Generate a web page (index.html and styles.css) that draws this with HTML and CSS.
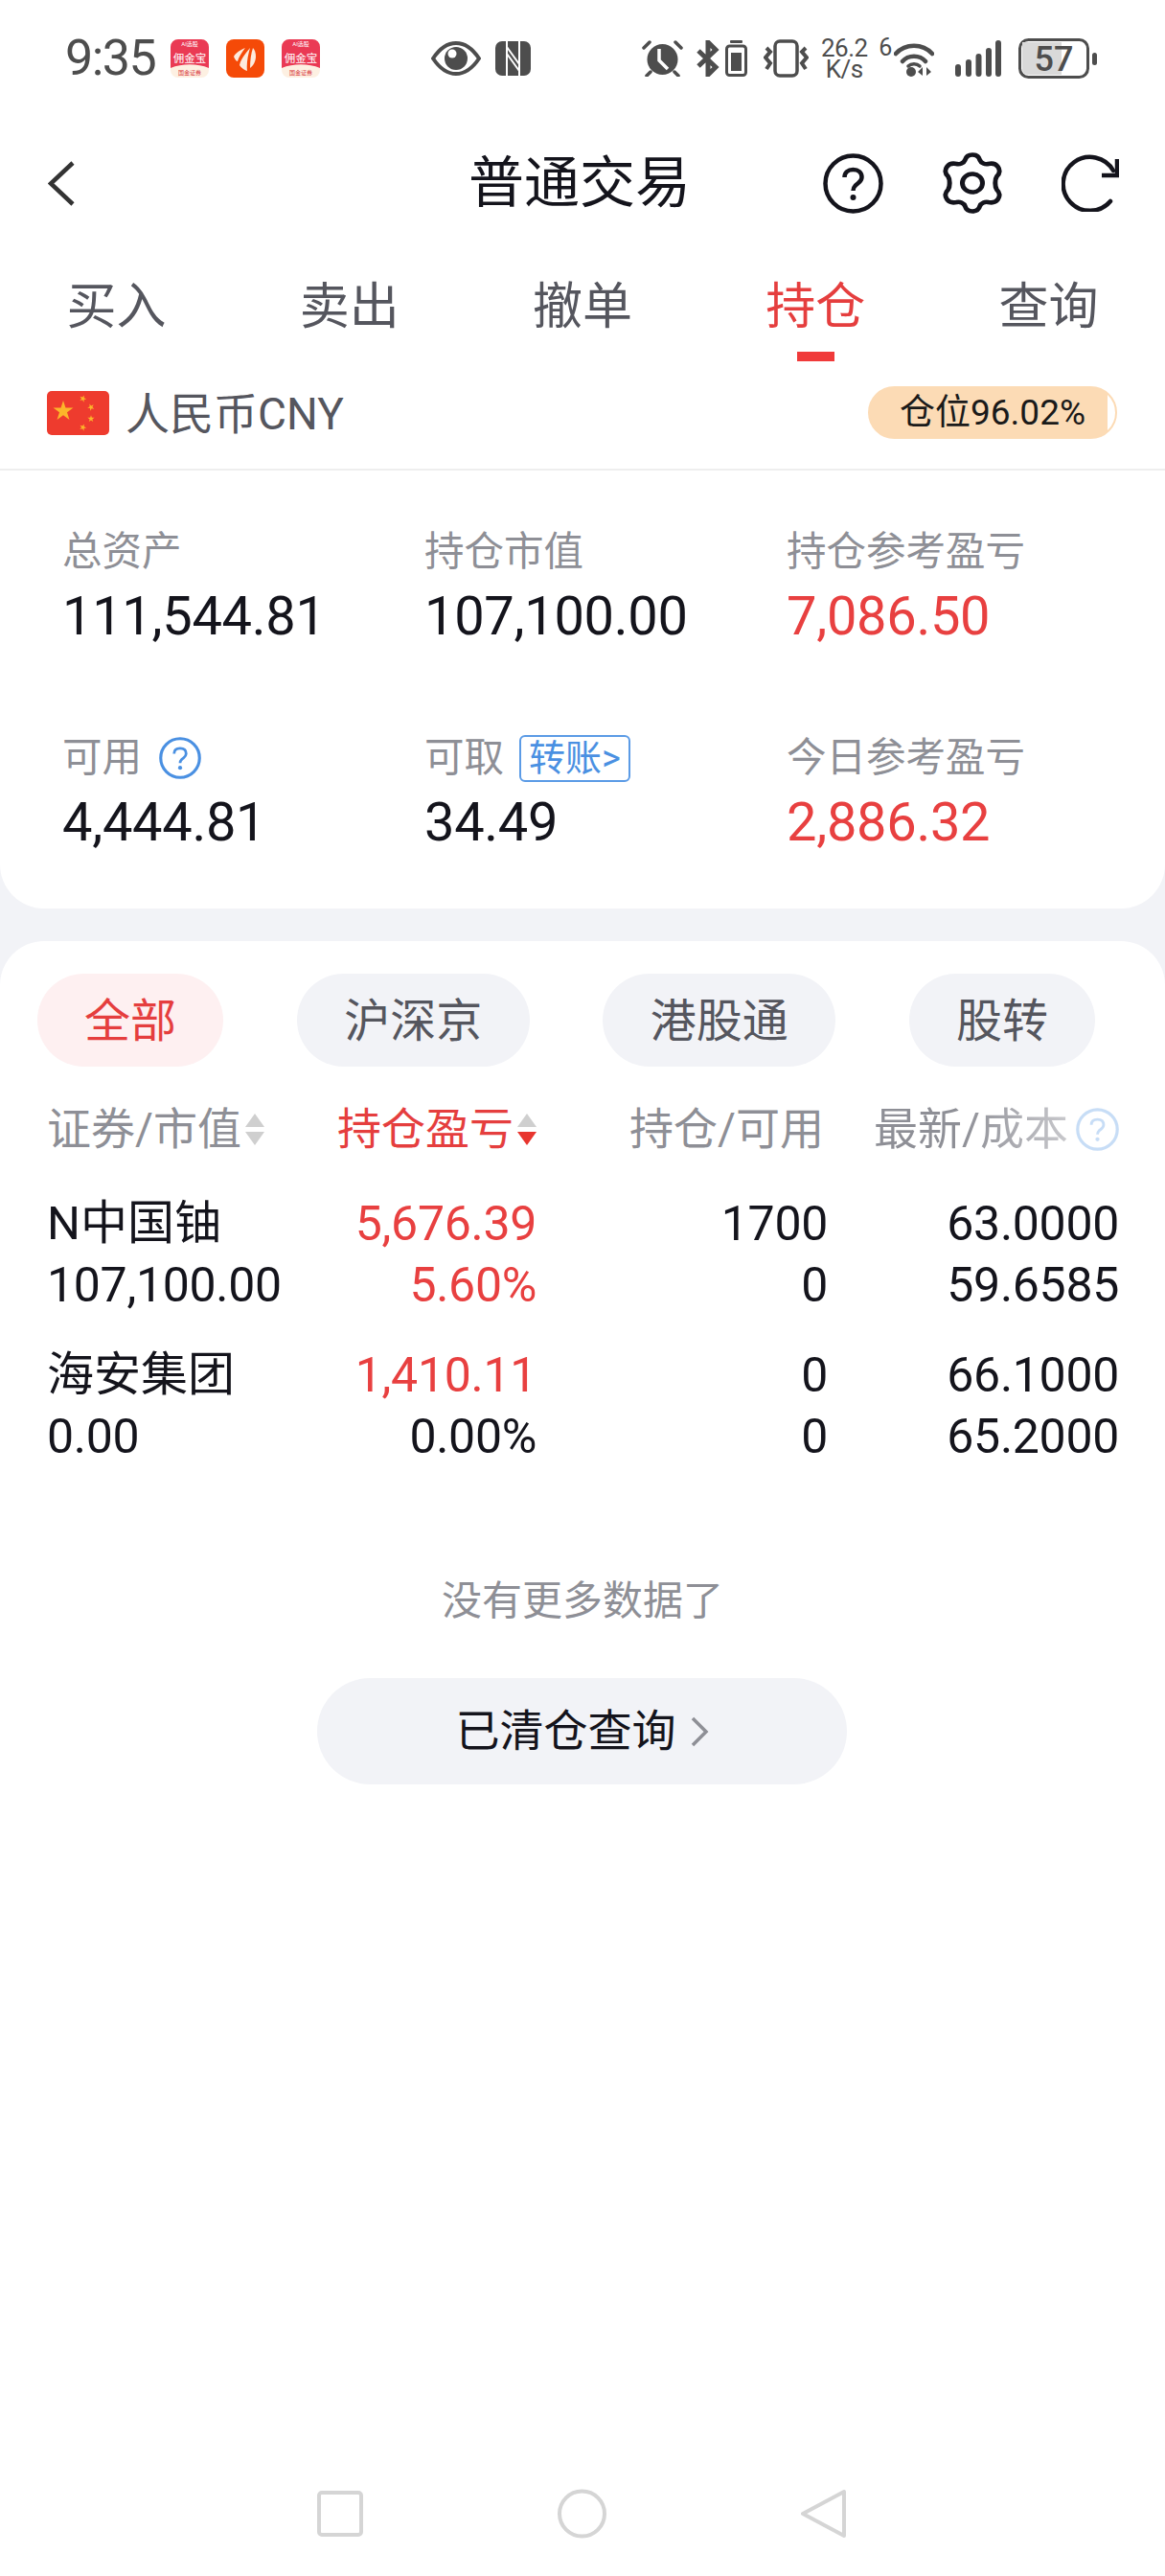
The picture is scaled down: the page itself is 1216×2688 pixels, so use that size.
FILE: index.html
```html
<!DOCTYPE html>
<html>
<head>
    <title>普通交易</title>
    <link rel="stylesheet" href="styles.css">
</head>
<body>
    <div class="top-section">
        <!-- status bar -->
        <div class="status-bar">
            <span class="time">9:35</span>
            <svg class="app-icon" width="40" height="40" viewBox="0 0 40 40">
                <rect width="40" height="40" rx="8" fill="#fdf0e2"/>
                <path d="M0 8 a8 8 0 0 1 8 -8 h24 a8 8 0 0 1 8 8 v22 c-12 -5 -28 -5 -40 0z" fill="#ea3a54"/>
                <text x="20" y="7" class="app-tiny" fill="#fff">AI选股</text>
                <text x="20" y="24" class="app-name" fill="#fff">佣金宝</text>
                <text x="20" y="37" class="app-tiny" fill="#d8363c">国金证券</text>
            </svg>
            <svg class="app-icon" width="40" height="40" viewBox="0 0 40 40">
                <rect width="40" height="40" rx="8" fill="#f54a08"/>
                <path d="M20 9 C15 11 10 14 8 18 C9 21 11 23 12 23 C13 19 16 14 20 9Z" fill="#fdebdd"/>
                <path d="M25 9 C20 15 15 21 14 27 C16 30 19 32 22 33 C21 25 23 16 25 9Z" fill="#fdebdd"/>
                <path d="M28 9 C26 15 25 22 25 30 C28 28 31 23 31 18 C31 14 30 11 28 9Z" fill="#fdebdd"/>
            </svg>
            <svg class="app-icon" width="40" height="40" viewBox="0 0 40 40">
                <rect width="40" height="40" rx="8" fill="#fdf0e2"/>
                <path d="M0 8 a8 8 0 0 1 8 -8 h24 a8 8 0 0 1 8 8 v22 c-12 -5 -28 -5 -40 0z" fill="#ea3a54"/>
                <text x="20" y="7" class="app-tiny" fill="#fff">AI选股</text>
                <text x="20" y="24" class="app-name" fill="#fff">佣金宝</text>
                <text x="20" y="37" class="app-tiny" fill="#d8363c">国金证券</text>
            </svg>

            <svg class="st-eye" width="52" height="36" viewBox="0 0 52 36">
                <path d="M2 18 C10 6 18 2 26 2 C34 2 42 6 50 18 C42 30 34 34 26 34 C18 34 10 30 2 18Z" fill="none" stroke="#4d4d4d" stroke-width="4"/>
                <circle cx="26" cy="18" r="12" fill="#4d4d4d"/>
                <circle cx="22" cy="13" r="4.5" fill="#fff"/>
            </svg>
            <svg class="st-nfc" width="37" height="36" viewBox="0 0 37 36">
                <rect width="37" height="36" rx="7" fill="#4d4d4d"/>
                <path d="M12 0 V36 M25 0 V36 M12 6 L25 24 M12 13 L25 31" fill="none" stroke="#fff" stroke-width="2"/>
            </svg>
            <svg class="st-alarm" width="43" height="38" viewBox="0 0 43 38">
                <circle cx="21.5" cy="20" r="16" fill="#4d4d4d"/>
                <path d="M18 9 V21 L27 30" fill="none" stroke="#fff" stroke-width="3.5"/>
                <path d="M2 8 L8 2 M35 2 L41 8 M5 37 L9 33 M38 37 L34 33" fill="none" stroke="#4d4d4d" stroke-width="3.5" stroke-linecap="round"/>
            </svg>
            <svg class="st-bt" width="53" height="38" viewBox="0 0 53 38">
                <path d="M2 11 L20 28 L12 36 V2 L20 10 L2 27" fill="none" stroke="#4d4d4d" stroke-width="5"/>
                <rect x="31.5" y="6" width="20" height="30.5" rx="3" fill="none" stroke="#4d4d4d" stroke-width="3"/>
                <rect x="35" y="0" width="13" height="3" rx="1" fill="#4d4d4d"/>
                <rect x="36" y="13" width="11" height="19" fill="#4d4d4d"/>
            </svg>
            <svg class="st-vibrate" width="47" height="40" viewBox="0 0 47 40">
                <rect x="12" y="2" width="23" height="36" rx="5" fill="none" stroke="#4d4d4d" stroke-width="3.5"/>
                <path d="M3 9 L7 13 L2 19 L7 25 L3 31 M44 9 L40 13 L45 19 L40 25 L44 31" fill="none" stroke="#4d4d4d" stroke-width="4"/>
            </svg>
            <div class="st-speed"><span>26.2</span><span>K/s</span></div>
            <span class="st-six">6</span>
            <svg class="st-wifi" width="42" height="38" viewBox="0 0 42 38">
                <path d="M2 14 C12 3 30 3 40 14 M9 22 C15 15 27 15 33 22" fill="none" stroke="#4d4d4d" stroke-width="4.5" stroke-linecap="round"/>
                <path d="M15 27 C18 24 24 24 27 27" fill="none" stroke="#4d4d4d" stroke-width="3.5" stroke-linecap="round"/>
                <circle cx="18" cy="33" r="5" fill="#4d4d4d"/>
                <path d="M30 28 V37 L25 33Z M34 28 V37 L39 33Z" fill="#4d4d4d"/>
            </svg>
            <svg class="st-signal" width="48" height="38" viewBox="0 0 48 38">
                <path d="M3 28 V35 M14 23 V35 M24.500 17 V35 M35 11 V35 M45 3 V35" fill="none" stroke="#4d4d4d" stroke-width="6" stroke-linecap="round"/>
            </svg>
            <svg class="st-battery" width="82" height="42" viewBox="0 0 82 42">
                <rect x="1.500" y="1.500" width="71" height="39" rx="9" fill="#fff" stroke="#4d4d4d" stroke-width="3"/>
                <path d="M4 4 h41 v34 h-35 a6 6 0 0 1 -6 -6z" fill="#d9d9d9"/>
                <text x="37" y="34" class="battery-num" fill="#4d4d4d">57</text>
                <rect x="77" y="15" width="5" height="13" rx="2.500" fill="#4d4d4d"/>
            </svg>
        </div>

        <!-- title -->
        <div class="nav">
            <svg class="back" width="28" height="47" viewBox="0 0 28 47">
                <path d="M26 2 L3 23.500 L26 45" fill="none" stroke="#333" stroke-width="4.500"/>
            </svg>
            <h1>普通交易</h1>
            <div class="nav-actions">
                <svg width="63" height="63" viewBox="0 0 63 63">
                    <circle cx="31.500" cy="31.500" r="29" fill="none" stroke="#14141c" stroke-width="4.500"/>
                    <path d="M22.500 25 C22.500 20 26 17 31.500 17 C37 17 40.500 20 40.500 25 C40.500 30 36 31 33.500 34 C32 35.500 31.500 37 31.500 39" fill="none" stroke="#14141c" stroke-width="4.500"/>
                    <circle cx="31.500" cy="46" r="3" fill="#14141c"/>
                </svg>
                <svg width="62" height="64" viewBox="4 0 56 64" preserveAspectRatio="none">
                    <path d="M25 8 C26 4 29 2.500 32 2.500 C35 2.500 38 4 39 8 C40 11 44 13 47 12 C51 11 54 12 56 15 C58 18 58 22 55 25 C53 28 53 36 55 39 C58 42 58 46 56 49 C54 52 51 53 47 52 C44 51 40 53 39 56 C38 60 35 61.500 32 61.500 C29 61.500 26 60 25 56 C24 53 20 51 17 52 C13 53 10 52 8 49 C6 46 6 42 9 39 C11 36 11 28 9 25 C6 22 6 18 8 15 C10 12 13 11 17 12 C20 13 24 11 25 8Z" fill="none" stroke="#14141c" stroke-width="4.500"/>
                    <circle cx="32" cy="32" r="9.500" fill="none" stroke="#14141c" stroke-width="4.500"/>
                </svg>
                <svg width="60" height="60" viewBox="0 0 60 60">
                    <path d="M54 17 A28 28 0 1 0 51 49" fill="none" stroke="#14141c" stroke-width="4.500" stroke-linecap="round"/>
                    <path d="M58 5 V22 H42" fill="none" stroke="#14141c" stroke-width="4.500"/>
                </svg>
            </div>
        </div>

        <div class="tabs">
            <div class="tab">买入</div>
            <div class="tab">卖出</div>
            <div class="tab">撤单</div>
            <div class="tab active">持仓<div class="tab-bar"></div></div>
            <div class="tab">查询</div>
        </div>

        <div class="currency-row">
            <svg width="65" height="46" viewBox="0 0 65 46">
                <defs>
                    <polygon id="star" points="0,-1 .225,-.309 .951,-.309 .363,.118 .588,.809 0,.382 -.588,.809 -.363,.118 -.951,-.309 -.225,-.309"/>
                </defs>
                <rect width="65" height="46" rx="5" fill="#ee3b2e"/>
                <use href="#star" fill="#fcb62a" transform="translate(17 21) scale(11)"/>
                <use href="#star" fill="#fcb62a" transform="translate(37.500 8) scale(3.800) rotate(20)"/>
                <use href="#star" fill="#fcb62a" transform="translate(46 17) scale(3.800) rotate(45)"/>
                <use href="#star" fill="#fcb62a" transform="translate(46 29) scale(3.800)"/>
                <use href="#star" fill="#fcb62a" transform="translate(37.500 38) scale(3.800) rotate(20)"/>
            </svg>
            <span class="currency-name">人民币CNY</span>
            <span class="position-pill">仓位96.02%</span>
        </div>

        <!-- account summary -->
        <div class="stats-card">
            <div class="stat">
                <div class="stat-label">总资产</div>
                <div class="stat-value">111,544.81</div>
            </div>
            <div class="stat">
                <div class="stat-label">持仓市值</div>
                <div class="stat-value">107,100.00</div>
            </div>
            <div class="stat">
                <div class="stat-label">持仓参考盈亏</div>
                <div class="stat-value red">7,086.50</div>
            </div>
            <div class="stat">
                <div class="stat-label">可用
                    <svg class="help" width="44" height="44" viewBox="0 0 63 63">
                        <symbol id="helpMark" viewBox="0 0 63 63">
                            <circle cx="31.500" cy="31.500" r="29" fill="none" stroke="#4a90e2" stroke-width="4.500"/>
                            <path d="M22.500 25 C22.500 20 26 17 31.500 17 C37 17 40.500 20 40.500 25 C40.500 30 36 31 33.500 34 C32 35.500 31.500 37 31.500 39" fill="none" stroke="#4a90e2" stroke-width="4"/>
                            <circle cx="31.500" cy="46" r="3" fill="#4a90e2"/>
                        </symbol>
                        <use href="#helpMark"/>
                    </svg>
                </div>
                <div class="stat-value">4,444.81</div>
            </div>
            <div class="stat">
                <div class="stat-label">可取<span class="transfer-tag">转账&gt;</span></div>
                <div class="stat-value">34.49</div>
            </div>
            <div class="stat">
                <div class="stat-label">今日参考盈亏</div>
                <div class="stat-value red">2,886.32</div>
            </div>
        </div>
    </div>

    <div class="holdings">
        <div class="filters">
            <div class="filter active narrow">全部</div>
            <div class="filter">沪深京</div>
            <div class="filter">港股通</div>
            <div class="filter narrow">股转</div>
        </div>

        <div class="table-row table-head">
            <div class="head-cell left">证券/市值
                <svg class="sort" width="20" height="33" viewBox="0 0 20 33">
                    <path d="M0 14 H20 L10 0Z M0 19 H20 L10 33Z" fill="#cfcfcf"/>
                </svg>
            </div>
            <div class="head-cell sorted">持仓盈亏
                <svg class="sort" width="20" height="33" viewBox="0 0 20 33">
                    <path d="M0 14 H20 L10 0Z" fill="#cfcfcf"/>
                    <path d="M0 19 H20 L10 33Z" fill="#e8352e"/>
                </svg>
            </div>
            <div class="head-cell head-qty">持仓/可用</div>
            <div class="head-cell last-head">
                <span class="fade-text">最新/成本</span>
                <svg class="help faded" width="45" height="45" viewBox="0 0 63 63"><use href="#helpMark"/></svg>
            </div>
        </div>

        <div class="table-row holding">
            <div class="cell left"><div class="name">N中国铀</div><div>107,100.00</div></div>
            <div class="cell red"><div>5,676.39</div><div>5.60%</div></div>
            <div class="cell"><div>1700</div><div>0</div></div>
            <div class="cell"><div>63.0000</div><div>59.6585</div></div>
        </div>
        <div class="table-row holding">
            <div class="cell left"><div class="name">海安集团</div><div>0.00</div></div>
            <div class="cell"><div class="red">1,410.11</div><div>0.00%</div></div>
            <div class="cell"><div>0</div><div>0</div></div>
            <div class="cell"><div>66.1000</div><div>65.2000</div></div>
        </div>

        <div class="no-more">没有更多数据了</div>
        <div class="cleared-button">已清仓查询
            <svg width="20" height="32" viewBox="0 0 20 32">
                <path d="M3 2 L17 16 L3 30" fill="none" stroke="#8e8f96" stroke-width="3.500"/>
            </svg>
        </div>

        <div class="system-nav">
            <svg width="48" height="48" viewBox="0 0 48 48">
                <rect x="2" y="2" width="44" height="44" rx="3" fill="none" stroke="#d5d5d5" stroke-width="4"/>
            </svg>
            <svg width="53" height="52" viewBox="0 0 53 52">
                <circle cx="26.500" cy="26" r="23.500" fill="none" stroke="#d5d5d5" stroke-width="4"/>
            </svg>
            <svg width="47" height="52" viewBox="0 0 47 52">
                <path d="M45 3 V49 L2 26Z" fill="none" stroke="#d5d5d5" stroke-width="4" stroke-linejoin="round"/>
            </svg>
        </div>
    </div>
</body>
</html>
```

FILE: styles.css
```css
html,
body {
    margin: 0;
    padding: 0;
}

body {
    width: 1216px;
    height: 2688px;
    display: flex;
    flex-direction: column;
    overflow: hidden;
    background-color: #f2f3f7;
    color: #14141c;
    font-family: Roboto, "Noto Sans CJK SC", sans-serif;
}

.red {
    color: #e84040;
}

.top-section {
    background-color: #fff;
    border-radius: 0 0 46px 46px;
}

/* status bar */
.status-bar {
    height: 122px;
    padding-left: 68px;
    display: flex;
    align-items: center;
    color: #4d4d4d;
}

.time {
    font-size: 52px;
    line-height: 60px;
    letter-spacing: -1.5px;
    margin-right: 16px;
}

.app-icon {
    margin-right: 18px;
}

.app-name {
    font-size: 11.5px;
    text-anchor: middle;
}

.app-tiny {
    font-size: 6px;
    text-anchor: middle;
}

.st-eye {
    margin-left: 98px;
}

.st-nfc {
    margin-left: 15px;
}

.st-alarm {
    margin-left: 116px;
}

.st-bt {
    margin-left: 14px;
}

.st-vibrate {
    margin-left: 17px;
}

.st-speed {
    margin-left: 10px;
    width: 54px;
    display: flex;
    flex-direction: column;
    align-items: center;
    font-size: 26px;
    line-height: 22px;
    letter-spacing: -0.5px;
}

.st-six {
    margin-left: 9px;
    margin-top: -22px;
    font-size: 25px;
    line-height: 26px;
}

.st-wifi {
    margin-left: 2px;
}

.st-signal {
    margin-left: 22px;
}

.st-battery {
    margin-left: 18px;
}

.battery-num {
    font-size: 36px;
    font-weight: 500;
    text-anchor: middle;
}

/* title bar */
.nav {
    height: 138px;
    padding: 0 48px 0 42px;
    display: grid;
    grid-template-columns: 1fr auto 1fr;
    align-items: center;
}

.back {
    margin-left: 8px;
}

.nav h1 {
    margin: 0;
    font-size: 58px;
    line-height: 70px;
    font-weight: 400;
}

.nav-actions {
    display: flex;
    align-items: center;
    justify-content: flex-end;
    gap: 62px;
}

/* tabs */
.tabs {
    margin-top: 31px;
    display: flex;
}

.tab {
    flex: 1;
    text-align: center;
    font-size: 52px;
    line-height: 60px;
    color: #55565e;
}

.tab:not(.active) {
    padding-bottom: 26px;
}

.tab.active {
    color: #e53e3e;
}

.tab-bar {
    width: 39px;
    height: 10px;
    margin: 16px auto 0;
    background-color: #f03a3a;
}

.currency-row {
    padding: 26px 50px 31px 49px;
    display: flex;
    align-items: center;
    border-bottom: 2px solid #eeeeee;
}

.currency-name {
    margin-left: 17px;
    padding-top: 3px;
    font-size: 46px;
    line-height: 52px;
    color: #55565e;
}

.position-pill {
    margin-left: auto;
    box-sizing: border-box;
    width: 260px;
    height: 55px;
    padding-left: 31px;
    border: 2px solid #fcdbb5;
    border-radius: 28px;
    background: linear-gradient(to right, #fcdbb5 97%, #fff 97%);
    font-size: 37px;
    line-height: 51px;
    color: #1a1a1a;
}

/* account summary */
.stats-card {
    padding: 57px 0 60px 65px;
    display: grid;
    grid-template-columns: 378px 378px 1fr;
    row-gap: 90px;
}

.stat-label {
    height: 56px;
    display: flex;
    align-items: center;
    font-size: 41.5px;
    line-height: 56px;
    color: #8e8f96;
}

.stat-value {
    margin-top: 9px;
    font-size: 56px;
    line-height: 60px;
    letter-spacing: -0.3px;
}

.help {
    margin-left: 18px;
}

.transfer-tag {
    box-sizing: border-box;
    width: 116px;
    height: 49px;
    margin-left: 16px;
    border: 2px solid #5b9be6;
    border-radius: 6px;
    text-align: center;
    font-size: 38px;
    line-height: 44px;
    color: #4a90e2;
}

/* holdings list */
.holdings {
    flex: 1;
    margin-top: 34px;
    display: flex;
    flex-direction: column;
    background-color: #fff;
    border-radius: 46px 46px 0 0;
}

.filters {
    padding: 34px 73px 0 39px;
    display: flex;
    justify-content: space-between;
}

.filter {
    width: 243px;
    height: 97px;
    border-radius: 49px;
    text-align: center;
    background-color: #f2f3f7;
    font-size: 48px;
    line-height: 99px;
    color: #55565e;
}

.filter.narrow {
    width: 194px;
}

.filter.active {
    background-color: #fef0f1;
    color: #e53e3e;
}

.table-row {
    padding: 0 48px 0 49px;
    display: grid;
    grid-template-columns: 252px 259px 304px 304px;
}

.table-head {
    margin-top: 35px;
}

.head-cell {
    display: flex;
    align-items: center;
    justify-content: flex-end;
    font-size: 46px;
    line-height: 60px;
    color: #8e8f96;
    white-space: nowrap;
}

.head-cell.left {
    justify-content: flex-start;
}

.head-cell.sorted {
    color: #e53e3e;
}

.head-cell.head-qty {
    padding-right: 4px;
}

.sort {
    margin-left: 4px;
}

.last-head .help {
    margin-left: 8px;
    margin-right: 0;
}

.fade-text {
    background: linear-gradient(to right, #8e8f96 45%, #c8c8cc 100%);
    -webkit-background-clip: text;
    background-clip: text;
    color: transparent;
}

.faded {
    opacity: 0.3;
}

.holding {
    margin-top: 30px;
}

.table-head + .holding {
    margin-top: 37px;
}

.cell {
    text-align: right;
    font-size: 50px;
    line-height: 64px;
    letter-spacing: -0.3px;
    white-space: nowrap;
}

.cell.left {
    text-align: left;
}

.name {
    font-size: 49px;
    letter-spacing: 0;
}

.no-more {
    margin-top: 110px;
    text-align: center;
    font-size: 42px;
    line-height: 60px;
    color: #8e8f96;
}

.cleared-button {
    width: 553px;
    height: 111px;
    margin: 50px 0 0 331px;
    display: flex;
    align-items: center;
    justify-content: center;
    gap: 14px;
    border-radius: 56px;
    background-color: #f2f3f7;
    font-size: 46px;
    line-height: 105px;
}

/* android nav buttons */
.system-nav {
    margin-top: auto;
    padding: 0 0 39px 331px;
    display: flex;
    align-items: center;
    gap: 202px;
}
```
